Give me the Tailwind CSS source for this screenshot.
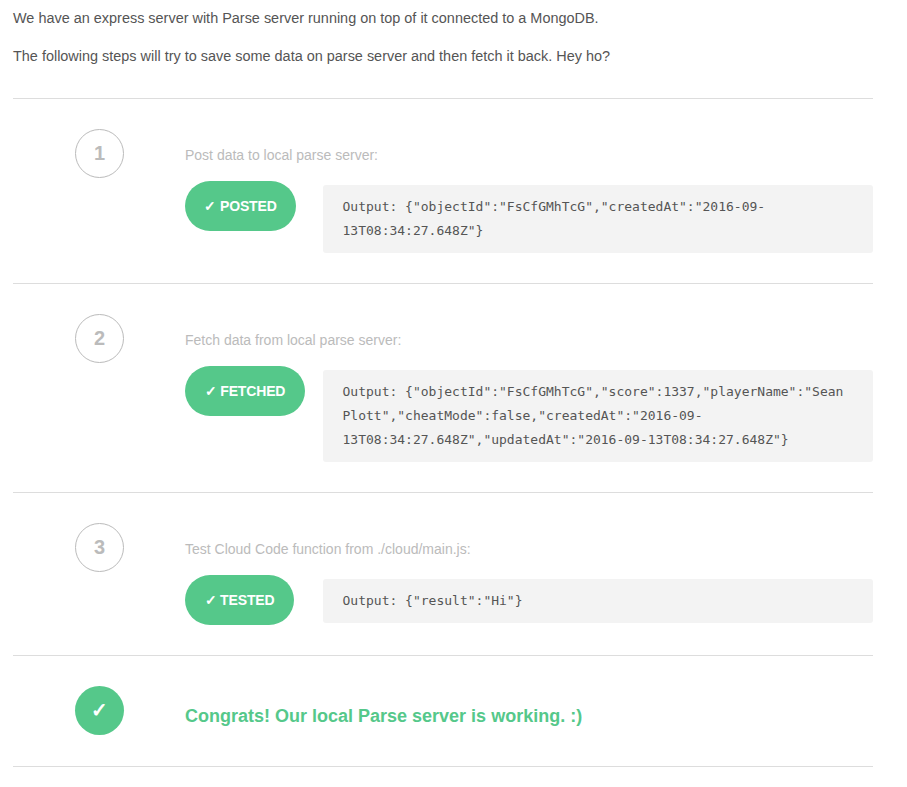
<!DOCTYPE html>
<html lang="en">
<head>
  <meta charset="UTF-8" />
  <title>Parse server</title>
  <script src="https://cdn.jsdelivr.net/npm/@tailwindcss/browser@4"></script>
</head>
<body class="bg-white font-['Liberation_Sans',sans-serif] text-[14.45px] text-[#555]">
  <div class="w-[860px] ml-[13px]">
    <p class="pt-[8px] leading-[20px]">We have an express server with Parse server running on top of it connected to a MongoDB.</p>
    <p class="mt-[18px] leading-[20px]">The following steps will try to save some data on parse server and then fetch it back. Hey ho?</p>

    <div class="mt-[32px] border-t border-[#ddd] pt-[30px] pb-[30px] flex">
      <div class="w-[172px] shrink-0 pl-[62px]">
        <div class="w-[49px] h-[49px] rounded-full border border-[#bbb] flex items-center justify-center pb-[2px] text-[20px] font-bold text-[#bbb]">1</div>
      </div>
      <div class="flex-1">
        <p class="mt-[16px] leading-[20px] text-[14px] text-[#bbb]">Post data to local parse server:</p>
        <div class="flex items-start mt-[16px]">
          <div class="w-[138px] shrink-0">
            <span class="inline-flex items-center h-[50px] w-[111px] justify-center rounded-full bg-[#55c88a] text-white text-[14px] font-bold tracking-[-0.15px]">✓ POSTED</span>
          </div>
          <pre class="flex-1 mt-[4px] bg-[#f3f3f3] rounded-[3px] pl-[19.5px] pr-[20px] py-[10px] font-['DejaVu_Sans_Mono',monospace] text-[13px] leading-[24px] whitespace-pre-wrap break-words text-[#555]">Output: {"objectId":"FsCfGMhTcG","createdAt":"2016-09-13T08:34:27.648Z"}</pre>
        </div>
      </div>
    </div>

    <div class="border-t border-[#ddd] pt-[30px] pb-[30px] flex">
      <div class="w-[172px] shrink-0 pl-[62px]">
        <div class="w-[49px] h-[49px] rounded-full border border-[#bbb] flex items-center justify-center pb-[2px] text-[20px] font-bold text-[#bbb]">2</div>
      </div>
      <div class="flex-1">
        <p class="mt-[16px] leading-[20px] text-[14px] text-[#bbb]">Fetch data from local parse server:</p>
        <div class="flex items-start mt-[16px]">
          <div class="w-[138px] shrink-0">
            <span class="inline-flex items-center h-[50px] w-[120px] justify-center rounded-full bg-[#55c88a] text-white text-[14px] font-bold tracking-[-0.15px]">✓ FETCHED</span>
          </div>
          <pre class="flex-1 mt-[4px] bg-[#f3f3f3] rounded-[3px] pl-[19.5px] pr-[20px] py-[10px] font-['DejaVu_Sans_Mono',monospace] text-[13px] leading-[24px] whitespace-pre-wrap break-words text-[#555]">Output: {"objectId":"FsCfGMhTcG","score":1337,"playerName":"Sean Plott","cheatMode":false,"createdAt":"2016-09-13T08:34:27.648Z","updatedAt":"2016-09-13T08:34:27.648Z"}</pre>
        </div>
      </div>
    </div>

    <div class="border-t border-[#ddd] pt-[30px] pb-[30px] flex">
      <div class="w-[172px] shrink-0 pl-[62px]">
        <div class="w-[49px] h-[49px] rounded-full border border-[#bbb] flex items-center justify-center pb-[2px] text-[20px] font-bold text-[#bbb]">3</div>
      </div>
      <div class="flex-1">
        <p class="mt-[16px] leading-[20px] text-[14px] text-[#bbb]">Test Cloud Code function from ./cloud/main.js:</p>
        <div class="flex items-start mt-[16px]">
          <div class="w-[138px] shrink-0">
            <span class="inline-flex items-center h-[50px] w-[109px] justify-center rounded-full bg-[#55c88a] text-white text-[14px] font-bold tracking-[-0.15px]">✓ TESTED</span>
          </div>
          <pre class="flex-1 mt-[4px] bg-[#f3f3f3] rounded-[3px] pl-[19.5px] pr-[20px] py-[10px] font-['DejaVu_Sans_Mono',monospace] text-[13px] leading-[24px] whitespace-pre-wrap break-words text-[#555]">Output: {"result":"Hi"}</pre>
        </div>
      </div>
    </div>

    <div class="border-t border-b border-[#ddd] pt-[30px] pb-[31px] flex">
      <div class="w-[172px] shrink-0 pl-[62px]">
        <div class="w-[49px] h-[49px] rounded-full bg-[#55c88a] flex items-center justify-center pb-[2px] text-[20px] font-bold text-white">✓</div>
      </div>
      <p class="mt-[18px] text-[18px] leading-[24px] font-bold text-[#55c88a]">Congrats! Our local Parse server is working. :)</p>
    </div>
  </div>
</body>
</html>
